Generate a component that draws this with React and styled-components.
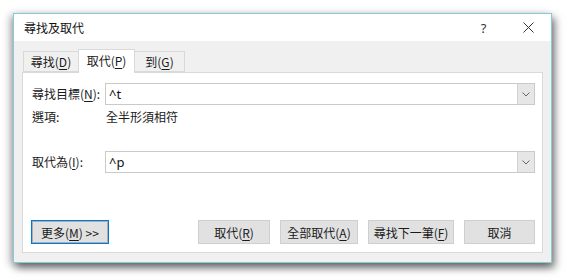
import React from "react";
import styled, { createGlobalStyle } from "styled-components";

const Global = createGlobalStyle`
  html, body { margin: 0; padding: 0; background: #ffffff; }
  body {
    font-family: "Noto Sans CJK TC", "Noto Sans", sans-serif;
    font-size: 12px;
    color: #1a1a1a;
  }
`;

const Page = styled.div`
  width: 567px;
  height: 280px;
  padding: 13px 0 0 13px;
  box-sizing: border-box;
  overflow: hidden;
`;

const Dialog = styled.div`
  width: 539px;
  height: 250px;
  box-sizing: border-box;
  border: 1px solid #86cbd8;
  background: #f0f0f0;
  display: flex;
  flex-direction: column;
  box-shadow: 3px 5px 8px rgba(0, 0, 0, 0.5), -3px 2px 8px rgba(0, 0, 0, 0.28);
`;

const TitleBar = styled.div`
  height: 27px;
  background: #ffffff;
  display: flex;
  align-items: center;
  padding-left: 10px;
  flex-shrink: 0;
`;

const Title = styled.div`
  flex: 1;
  font-size: 12px;
  line-height: 1;
  color: #111;
`;

const TitleButton = styled.div`
  width: ${(p) => p.$w}px;
  height: 27px;
  display: flex;
  align-items: center;
  justify-content: center;
  font-family: "Noto Sans", sans-serif;
  font-size: 13px;
  color: #333;
`;

const Body = styled.div`
  flex: 1;
  display: flex;
  flex-direction: column;
  padding: 8px 8px 9px 8px;
`;

const TabStrip = styled.div`
  display: flex;
  align-items: flex-end;
  height: 23px;
  padding-left: 1px;
  flex-shrink: 0;
`;

const Tab = styled.div`
  position: relative;
  box-sizing: border-box;
  width: ${(p) => p.$w}px;
  height: ${(p) => (p.$active ? 24 : 21)}px;
  margin-bottom: ${(p) => (p.$active ? -1 : 0)}px;
  z-index: ${(p) => (p.$active ? 2 : 1)};
  background: ${(p) => (p.$active ? "#ffffff" : "#f0f0f0")};
  border: 1px solid #d9d9d9;
  border-bottom: ${(p) => (p.$active ? "none" : "1px solid #d9d9d9")};
  margin-left: ${(p) => (p.$first ? 0 : -1)}px;
  display: flex;
  align-items: center;
  justify-content: center;
  font-size: 12px;
  padding-bottom: ${(p) => (p.$active ? 2 : 0)}px;
`;

const Panel = styled.div`
  flex: 1;
  background: #ffffff;
  border: 1px solid #d9d9d9;
  display: flex;
  flex-direction: column;
  padding: 10px 7px 8px 9px;
`;

const FieldRow = styled.div`
  display: grid;
  grid-template-columns: 73px 1fr;
  align-items: center;
  height: ${(p) => p.$h}px;
  margin-top: ${(p) => p.$mt || 0}px;
`;

const Label = styled.div`
  font-size: 12px;
  line-height: 1;
  white-space: nowrap;
`;

const Value = styled.div`
  font-size: 12px;
  line-height: 1;
  padding-left: 1px;
`;

const Combo = styled.div`
  height: 22px;
  box-sizing: border-box;
  border: 1px solid #cacaca;
  display: flex;
  align-items: stretch;
  background: #fff;
`;

const ComboText = styled.div`
  flex: 1;
  display: flex;
  align-items: center;
  padding-left: 3px;
  font-family: "Noto Sans", sans-serif;
  font-size: 13px;
  color: #111;
`;

const ComboArrow = styled.div`
  width: 16px;
  background: #e6e6e6;
  border-left: 1px solid #d2d2d2;
  display: flex;
  align-items: center;
  justify-content: center;
`;

const ButtonRow = styled.div`
  margin-top: auto;
  margin-left: -1px;
  display: flex;
  align-items: center;
  gap: 10px;
`;

const Button = styled.div`
  box-sizing: border-box;
  width: ${(p) => p.$w}px;
  height: 24px;
  background: #e1e1e1;
  border: 1px solid ${(p) => (p.$focused ? "#0078d7" : "#cfcfcf")};
  box-shadow: ${(p) => (p.$focused ? "inset 0 0 0 1px #adadad" : "none")};
  display: flex;
  align-items: center;
  justify-content: center;
  font-size: 12px;
  color: #1a1a1a;
  white-space: nowrap;
`;

const Spacer = styled.div`
  flex: 1;
`;

const Key = styled.u`
  text-underline-offset: 2px;
`;

const CloseIcon = () => (
  <svg width="11" height="11" viewBox="0 0 11 11">
    <path d="M0.5 0.5 L10.5 10.5 M10.5 0.5 L0.5 10.5" stroke="#333" strokeWidth="1" fill="none" />
  </svg>
);

const Chevron = () => (
  <svg width="8" height="5" viewBox="0 0 8 5">
    <path d="M0.5 0.5 L4 4 L7.5 0.5" stroke="#666" strokeWidth="1" fill="none" />
  </svg>
);

export default function App() {
  return (
    <>
      <Global />
      <Page>
        <Dialog>
          <TitleBar>
            <Title>尋找及取代</Title>
            <TitleButton $w={45}>?</TitleButton>
            <TitleButton $w={45}>
              <CloseIcon />
            </TitleButton>
          </TitleBar>
          <Body>
            <TabStrip>
              <Tab $w={56} $first>
                尋找(<Key>D</Key>)
              </Tab>
              <Tab $w={57} $active>
                取代(<Key>P</Key>)
              </Tab>
              <Tab $w={51}>
                到(<Key>G</Key>)
              </Tab>
            </TabStrip>
            <Panel>
              <FieldRow $h={22}>
                <Label>
                  尋找目標(<Key>N</Key>):
                </Label>
                <Combo>
                  <ComboText>^t</ComboText>
                  <ComboArrow>
                    <Chevron />
                  </ComboArrow>
                </Combo>
              </FieldRow>
              <FieldRow $h={18} $mt={3}>
                <Label>選項:</Label>
                <Value>全半形須相符</Value>
              </FieldRow>
              <FieldRow $h={22} $mt={25}>
                <Label>
                  取代為(<Key>I</Key>):
                </Label>
                <Combo>
                  <ComboText>^p</ComboText>
                  <ComboArrow>
                    <Chevron />
                  </ComboArrow>
                </Combo>
              </FieldRow>
              <ButtonRow>
                <Button $w={78} $focused>
                  更多(<Key>M</Key>) &gt;&gt;
                </Button>
                <Spacer />
                <Button $w={72}>
                  取代(<Key>R</Key>)
                </Button>
                <Button $w={78}>
                  全部取代(<Key>A</Key>)
                </Button>
                <Button $w={86}>
                  尋找下一筆(<Key>F</Key>)
                </Button>
                <Button $w={71}>取消</Button>
              </ButtonRow>
            </Panel>
          </Body>
        </Dialog>
      </Page>
    </>
  );
}
